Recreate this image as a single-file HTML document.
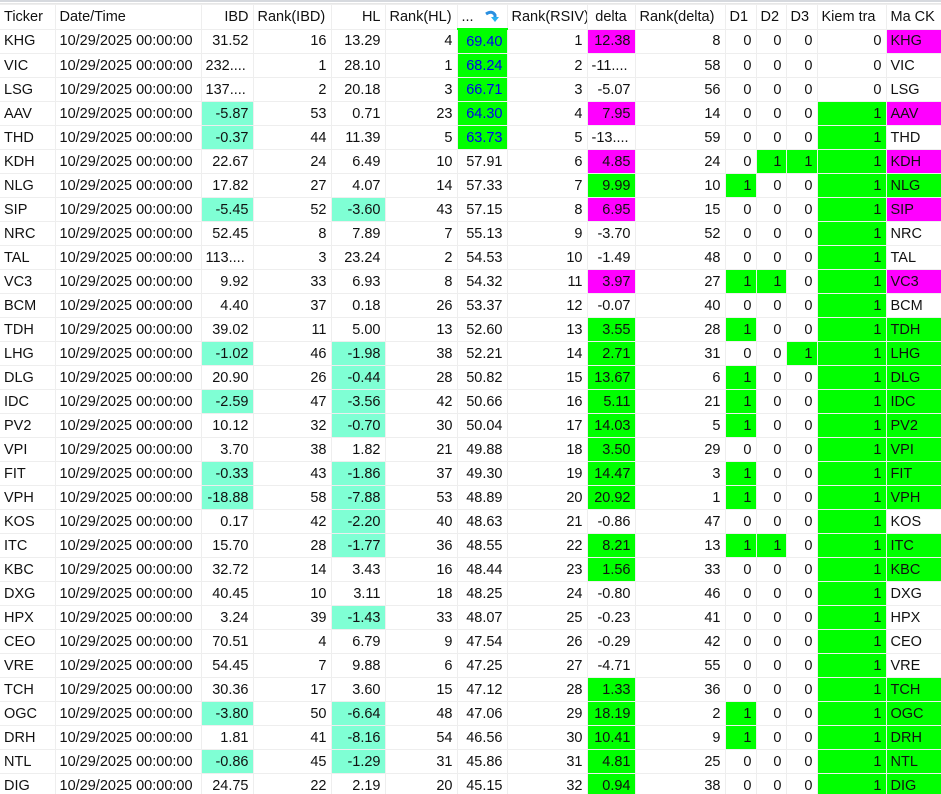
<!DOCTYPE html>
<html><head><meta charset="utf-8"><style>
html,body{margin:0;padding:0;background:#fff;width:941px;height:794px;overflow:hidden}
.top{height:4px;background:#fff;border-bottom:1px solid #e6e6e6;box-sizing:border-box;position:relative}
.top:before{content:"";position:absolute;left:0;top:0;width:941px;height:2px;background:#d6d9de}
table{border-collapse:collapse;table-layout:fixed;font-family:"Liberation Sans",sans-serif;font-size:14.5px;color:#111;width:941px}
td,th{border:1px solid #eeeeee;height:23px;line-height:20px;padding:0 4px;white-space:nowrap;overflow:hidden;text-align:right}
th{font-weight:normal;text-align:left;background:#fff}
th.r{text-align:right}
td.l{text-align:left}
td:first-child,th:first-child{border-left:none}
.t{background:#7fffd4}.g{background:#00ff00}.m{background:#ff00ff}.b{color:#0000ee}
</style></head><body>
<div class="top"></div>
<table>
<colgroup><col style="width:55px"><col style="width:146px"><col style="width:52px"><col style="width:78px"><col style="width:54px"><col style="width:72px"><col style="width:50px"><col style="width:80px"><col style="width:48px"><col style="width:90px"><col style="width:31px"><col style="width:30px"><col style="width:31px"><col style="width:69px"><col style="width:55px"></colgroup>
<tr><th>Ticker</th><th>Date/Time</th><th class="r">IBD</th><th>Rank(IBD)</th><th class="r">HL</th><th>Rank(HL)</th><th style="border-bottom:2px solid #00ff00">... <svg width="16" height="14" viewBox="0 0 16 14" style="vertical-align:middle;margin-left:6px"><path d="M2 4 Q8 0 11 5 L11 7" stroke="#2a8fe0" stroke-width="3" fill="none"/><path d="M7 7 L15 7 L11 12 Z" fill="#2ab0f0"/></svg></th><th>Rank(RSIV)</th><th style="text-align:center">delta</th><th>Rank(delta)</th><th>D1</th><th>D2</th><th>D3</th><th>Kiem tra</th><th>Ma CK</th></tr>
<tr><td class="l">KHG</td><td class="l">10/29/2025 00:00:00</td><td>31.52</td><td>16</td><td>13.29</td><td>4</td><td class="g b">69.40</td><td>1</td><td class="m">12.38</td><td>8</td><td>0</td><td>0</td><td>0</td><td>0</td><td class="l m">KHG</td></tr>
<tr><td class="l">VIC</td><td class="l">10/29/2025 00:00:00</td><td class="l">232....</td><td>1</td><td>28.10</td><td>1</td><td class="g b">68.24</td><td>2</td><td class="l">-11....</td><td>58</td><td>0</td><td>0</td><td>0</td><td>0</td><td class="l">VIC</td></tr>
<tr><td class="l">LSG</td><td class="l">10/29/2025 00:00:00</td><td class="l">137....</td><td>2</td><td>20.18</td><td>3</td><td class="g b">66.71</td><td>3</td><td>-5.07</td><td>56</td><td>0</td><td>0</td><td>0</td><td>0</td><td class="l">LSG</td></tr>
<tr><td class="l">AAV</td><td class="l">10/29/2025 00:00:00</td><td class="t">-5.87</td><td>53</td><td>0.71</td><td>23</td><td class="g b">64.30</td><td>4</td><td class="m">7.95</td><td>14</td><td>0</td><td>0</td><td>0</td><td class="g">1</td><td class="l m">AAV</td></tr>
<tr><td class="l">THD</td><td class="l">10/29/2025 00:00:00</td><td class="t">-0.37</td><td>44</td><td>11.39</td><td>5</td><td class="g b">63.73</td><td>5</td><td class="l">-13....</td><td>59</td><td>0</td><td>0</td><td>0</td><td class="g">1</td><td class="l">THD</td></tr>
<tr><td class="l">KDH</td><td class="l">10/29/2025 00:00:00</td><td>22.67</td><td>24</td><td>6.49</td><td>10</td><td>57.91</td><td>6</td><td class="m">4.85</td><td>24</td><td>0</td><td class="g">1</td><td class="g">1</td><td class="g">1</td><td class="l m">KDH</td></tr>
<tr><td class="l">NLG</td><td class="l">10/29/2025 00:00:00</td><td>17.82</td><td>27</td><td>4.07</td><td>14</td><td>57.33</td><td>7</td><td class="g">9.99</td><td>10</td><td class="g">1</td><td>0</td><td>0</td><td class="g">1</td><td class="l g">NLG</td></tr>
<tr><td class="l">SIP</td><td class="l">10/29/2025 00:00:00</td><td class="t">-5.45</td><td>52</td><td class="t">-3.60</td><td>43</td><td>57.15</td><td>8</td><td class="m">6.95</td><td>15</td><td>0</td><td>0</td><td>0</td><td class="g">1</td><td class="l m">SIP</td></tr>
<tr><td class="l">NRC</td><td class="l">10/29/2025 00:00:00</td><td>52.45</td><td>8</td><td>7.89</td><td>7</td><td>55.13</td><td>9</td><td>-3.70</td><td>52</td><td>0</td><td>0</td><td>0</td><td class="g">1</td><td class="l">NRC</td></tr>
<tr><td class="l">TAL</td><td class="l">10/29/2025 00:00:00</td><td class="l">113....</td><td>3</td><td>23.24</td><td>2</td><td>54.53</td><td>10</td><td>-1.49</td><td>48</td><td>0</td><td>0</td><td>0</td><td class="g">1</td><td class="l">TAL</td></tr>
<tr><td class="l">VC3</td><td class="l">10/29/2025 00:00:00</td><td>9.92</td><td>33</td><td>6.93</td><td>8</td><td>54.32</td><td>11</td><td class="m">3.97</td><td>27</td><td class="g">1</td><td class="g">1</td><td>0</td><td class="g">1</td><td class="l m">VC3</td></tr>
<tr><td class="l">BCM</td><td class="l">10/29/2025 00:00:00</td><td>4.40</td><td>37</td><td>0.18</td><td>26</td><td>53.37</td><td>12</td><td>-0.07</td><td>40</td><td>0</td><td>0</td><td>0</td><td class="g">1</td><td class="l">BCM</td></tr>
<tr><td class="l">TDH</td><td class="l">10/29/2025 00:00:00</td><td>39.02</td><td>11</td><td>5.00</td><td>13</td><td>52.60</td><td>13</td><td class="g">3.55</td><td>28</td><td class="g">1</td><td>0</td><td>0</td><td class="g">1</td><td class="l g">TDH</td></tr>
<tr><td class="l">LHG</td><td class="l">10/29/2025 00:00:00</td><td class="t">-1.02</td><td>46</td><td class="t">-1.98</td><td>38</td><td>52.21</td><td>14</td><td class="g">2.71</td><td>31</td><td>0</td><td>0</td><td class="g">1</td><td class="g">1</td><td class="l g">LHG</td></tr>
<tr><td class="l">DLG</td><td class="l">10/29/2025 00:00:00</td><td>20.90</td><td>26</td><td class="t">-0.44</td><td>28</td><td>50.82</td><td>15</td><td class="g">13.67</td><td>6</td><td class="g">1</td><td>0</td><td>0</td><td class="g">1</td><td class="l g">DLG</td></tr>
<tr><td class="l">IDC</td><td class="l">10/29/2025 00:00:00</td><td class="t">-2.59</td><td>47</td><td class="t">-3.56</td><td>42</td><td>50.66</td><td>16</td><td class="g">5.11</td><td>21</td><td class="g">1</td><td>0</td><td>0</td><td class="g">1</td><td class="l g">IDC</td></tr>
<tr><td class="l">PV2</td><td class="l">10/29/2025 00:00:00</td><td>10.12</td><td>32</td><td class="t">-0.70</td><td>30</td><td>50.04</td><td>17</td><td class="g">14.03</td><td>5</td><td class="g">1</td><td>0</td><td>0</td><td class="g">1</td><td class="l g">PV2</td></tr>
<tr><td class="l">VPI</td><td class="l">10/29/2025 00:00:00</td><td>3.70</td><td>38</td><td>1.82</td><td>21</td><td>49.88</td><td>18</td><td class="g">3.50</td><td>29</td><td>0</td><td>0</td><td>0</td><td class="g">1</td><td class="l g">VPI</td></tr>
<tr><td class="l">FIT</td><td class="l">10/29/2025 00:00:00</td><td class="t">-0.33</td><td>43</td><td class="t">-1.86</td><td>37</td><td>49.30</td><td>19</td><td class="g">14.47</td><td>3</td><td class="g">1</td><td>0</td><td>0</td><td class="g">1</td><td class="l g">FIT</td></tr>
<tr><td class="l">VPH</td><td class="l">10/29/2025 00:00:00</td><td class="t">-18.88</td><td>58</td><td class="t">-7.88</td><td>53</td><td>48.89</td><td>20</td><td class="g">20.92</td><td>1</td><td class="g">1</td><td>0</td><td>0</td><td class="g">1</td><td class="l g">VPH</td></tr>
<tr><td class="l">KOS</td><td class="l">10/29/2025 00:00:00</td><td>0.17</td><td>42</td><td class="t">-2.20</td><td>40</td><td>48.63</td><td>21</td><td>-0.86</td><td>47</td><td>0</td><td>0</td><td>0</td><td class="g">1</td><td class="l">KOS</td></tr>
<tr><td class="l">ITC</td><td class="l">10/29/2025 00:00:00</td><td>15.70</td><td>28</td><td class="t">-1.77</td><td>36</td><td>48.55</td><td>22</td><td class="g">8.21</td><td>13</td><td class="g">1</td><td class="g">1</td><td>0</td><td class="g">1</td><td class="l g">ITC</td></tr>
<tr><td class="l">KBC</td><td class="l">10/29/2025 00:00:00</td><td>32.72</td><td>14</td><td>3.43</td><td>16</td><td>48.44</td><td>23</td><td class="g">1.56</td><td>33</td><td>0</td><td>0</td><td>0</td><td class="g">1</td><td class="l g">KBC</td></tr>
<tr><td class="l">DXG</td><td class="l">10/29/2025 00:00:00</td><td>40.45</td><td>10</td><td>3.11</td><td>18</td><td>48.25</td><td>24</td><td>-0.80</td><td>46</td><td>0</td><td>0</td><td>0</td><td class="g">1</td><td class="l">DXG</td></tr>
<tr><td class="l">HPX</td><td class="l">10/29/2025 00:00:00</td><td>3.24</td><td>39</td><td class="t">-1.43</td><td>33</td><td>48.07</td><td>25</td><td>-0.23</td><td>41</td><td>0</td><td>0</td><td>0</td><td class="g">1</td><td class="l">HPX</td></tr>
<tr><td class="l">CEO</td><td class="l">10/29/2025 00:00:00</td><td>70.51</td><td>4</td><td>6.79</td><td>9</td><td>47.54</td><td>26</td><td>-0.29</td><td>42</td><td>0</td><td>0</td><td>0</td><td class="g">1</td><td class="l">CEO</td></tr>
<tr><td class="l">VRE</td><td class="l">10/29/2025 00:00:00</td><td>54.45</td><td>7</td><td>9.88</td><td>6</td><td>47.25</td><td>27</td><td>-4.71</td><td>55</td><td>0</td><td>0</td><td>0</td><td class="g">1</td><td class="l">VRE</td></tr>
<tr><td class="l">TCH</td><td class="l">10/29/2025 00:00:00</td><td>30.36</td><td>17</td><td>3.60</td><td>15</td><td>47.12</td><td>28</td><td class="g">1.33</td><td>36</td><td>0</td><td>0</td><td>0</td><td class="g">1</td><td class="l g">TCH</td></tr>
<tr><td class="l">OGC</td><td class="l">10/29/2025 00:00:00</td><td class="t">-3.80</td><td>50</td><td class="t">-6.64</td><td>48</td><td>47.06</td><td>29</td><td class="g">18.19</td><td>2</td><td class="g">1</td><td>0</td><td>0</td><td class="g">1</td><td class="l g">OGC</td></tr>
<tr><td class="l">DRH</td><td class="l">10/29/2025 00:00:00</td><td>1.81</td><td>41</td><td class="t">-8.16</td><td>54</td><td>46.56</td><td>30</td><td class="g">10.41</td><td>9</td><td class="g">1</td><td>0</td><td>0</td><td class="g">1</td><td class="l g">DRH</td></tr>
<tr><td class="l">NTL</td><td class="l">10/29/2025 00:00:00</td><td class="t">-0.86</td><td>45</td><td class="t">-1.29</td><td>31</td><td>45.86</td><td>31</td><td class="g">4.81</td><td>25</td><td>0</td><td>0</td><td>0</td><td class="g">1</td><td class="l g">NTL</td></tr>
<tr><td class="l">DIG</td><td class="l">10/29/2025 00:00:00</td><td>24.75</td><td>22</td><td>2.19</td><td>20</td><td>45.15</td><td>32</td><td class="g">0.94</td><td>38</td><td>0</td><td>0</td><td>0</td><td class="g">1</td><td class="l g">DIG</td></tr>
</table>
</body></html>
